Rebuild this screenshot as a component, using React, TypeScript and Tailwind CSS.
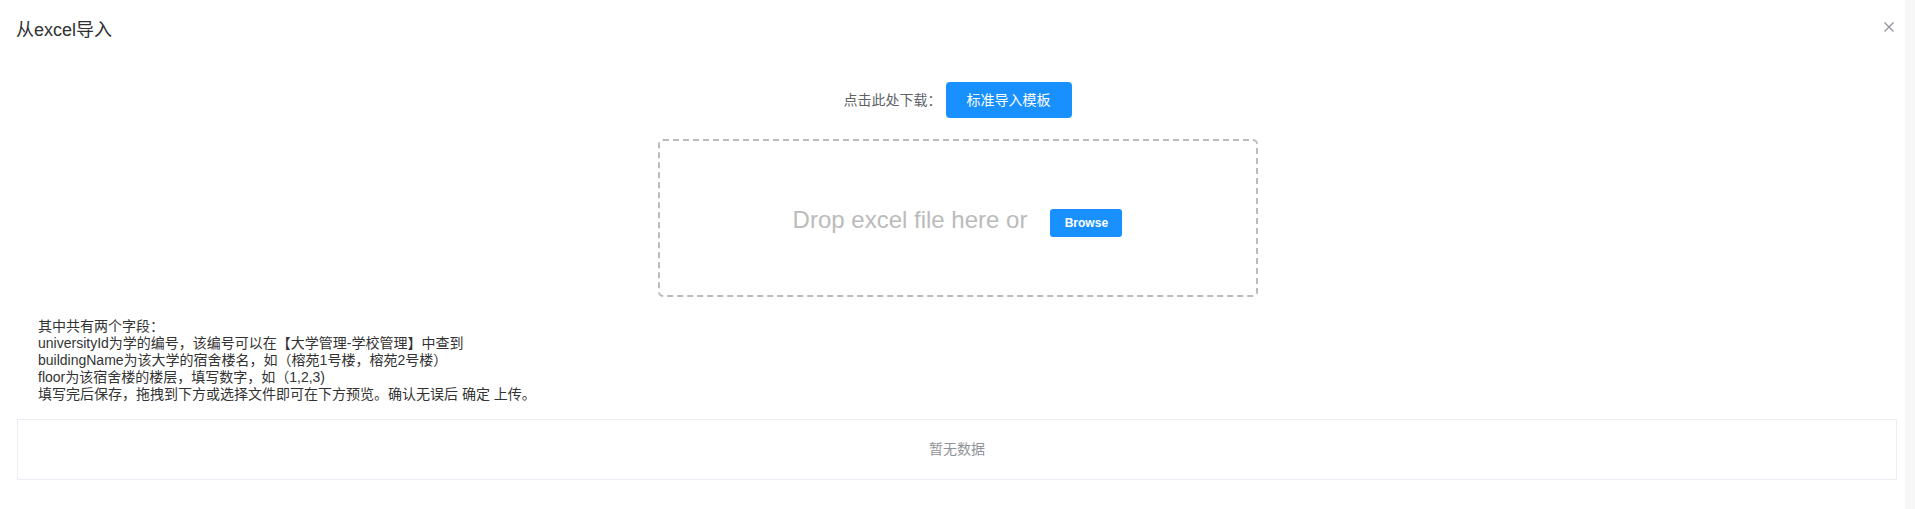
import React from "react";

export default function App() {
  const font = { fontFamily: '"Liberation Sans", "Noto Sans CJK SC", Arial, sans-serif' };
  return (
    <div className="flex w-full h-[509px] bg-white" style={font}>
      <div className="flex-1 flex flex-col">
        {/* header */}
        <div className="flex items-start justify-between pt-[18px] pl-[16px] pr-[11px]">
          <span className="text-[18px] leading-[24px] text-[#303133]">从excel导入</span>
          <svg width="10" height="10" viewBox="0 0 10 10" className="mt-[4px]">
            <path d="M0.5 0.5 L9.5 9.5 M9.5 0.5 L0.5 9.5" stroke="#909399" strokeWidth="1.3" />
          </svg>
        </div>

        {/* download row */}
        <div className="flex items-center justify-center mt-[40px] pl-[10px]">
          <span className="text-[14px] text-[#606266]">点击此处下载：</span>
          <button className="ml-[4px] h-[36px] px-[21px] rounded-[4px] bg-[#1890ff] text-white text-[14px]">
            标准导入模板
          </button>
        </div>

        {/* drop zone */}
        <div className="flex justify-center mt-[21px] pl-[10px]">
          <div className="w-[600px] h-[158px] border-2 border-dashed border-[#bbbbbb] rounded-[5px] flex items-center justify-center">
            <span className="text-[24px] text-[#bbbbbb] mt-[4px]">Drop excel file here or</span>
            <button className="ml-[23px] mt-[10px] w-[72px] h-[28px] rounded-[3px] bg-[#1890ff] text-white text-[12px] font-semibold">
              Browse
            </button>
          </div>
        </div>

        {/* instructions */}
        <div className="mt-[21px] pl-[38px] text-[14px] leading-[17px] text-[#333333]">
          <div>其中共有两个字段：</div>
          <div>universityId为学的编号，该编号可以在【大学管理-学校管理】中查到</div>
          <div>buildingName为该大学的宿舍楼名，如（榕苑1号楼，榕苑2号楼）</div>
          <div>floor为该宿舍楼的楼层，填写数字，如（1,2,3)</div>
          <div>填写完后保存，拖拽到下方或选择文件即可在下方预览。确认无误后 确定 上传。</div>
        </div>

        {/* table empty */}
        <div className="mt-[16px] ml-[17px] mr-[8px] h-[61px] border border-[#ebeef5] flex items-center justify-center">
          <span className="text-[14px] text-[#909399]">暂无数据</span>
        </div>
      </div>
      <div className="w-[10px] bg-[#f7f7f7]" />
    </div>
  );
}
